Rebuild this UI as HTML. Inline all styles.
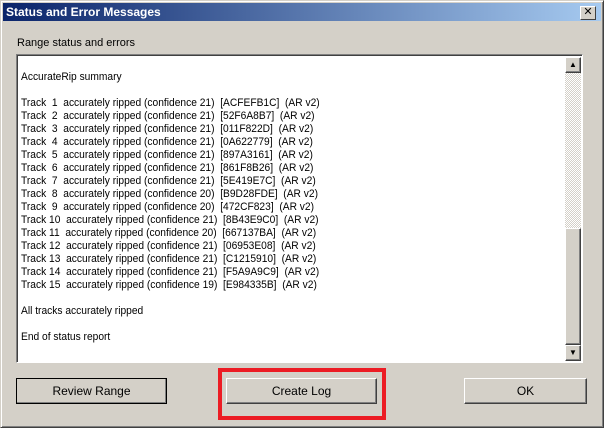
<!DOCTYPE html>
<html><head><style>
*{box-sizing:border-box;margin:0;padding:0}
body{width:604px;height:428px;background:#d4d0c8;font-family:"Liberation Sans",sans-serif;font-size:11px;position:relative;overflow:hidden;color:#000}
.win{position:absolute;left:0;top:0;width:604px;height:428px;border:1px solid;border-color:#d4d0c8 #404040 #404040 #d4d0c8;box-shadow:inset 1px 1px #fff,inset -1px -1px #808080}
.title{position:absolute;left:3px;top:3px;width:598px;height:18px;background:linear-gradient(to right,#0a246a,#a6caf0);color:#fff;font-weight:bold;font-size:12px;line-height:18px;padding-left:3px}
.x{position:absolute;right:5px;top:3px;width:16px;height:14px;background:#d4d0c8;border:1px solid;border-color:#fff #404040 #404040 #fff;font-size:11px;line-height:11px;text-align:center;color:#000;font-weight:normal}
.lbl{position:absolute;left:17px;top:37px}
.box{position:absolute;left:16px;top:54px;width:567px;height:309px;background:#fff;border:1px solid;border-color:#808080 #fff #fff #808080;box-shadow:inset 1px 1px #404040}
.txt{position:absolute;left:4px;top:16px;line-height:13px;white-space:pre;transform:scaleX(.93);transform-origin:0 0}
.sb{position:absolute;left:548px;top:2px;width:16px;height:304px;background:repeating-conic-gradient(#d4d0c8 0 25%,#fff 0 50%) 0 0/2px 2px}
.btn{position:absolute;background:#d4d0c8;border:1px solid;border-color:#fff #404040 #404040 #fff;box-shadow:inset -1px -1px #808080;text-align:center}
.ar{font-size:8px;line-height:14px}
.pb{position:absolute;height:26px;line-height:24px;font-size:12px}
</style></head><body>
<div class="win"></div>
<div class="title">Status and Error Messages<div class="x">✕</div></div>
<div class="lbl">Range status and errors</div>
<div class="box">
<div class="txt">AccurateRip summary

Track  1  accurately ripped (confidence 21)  [ACFEFB1C]  (AR v2)
Track  2  accurately ripped (confidence 21)  [52F6A8B7]  (AR v2)
Track  3  accurately ripped (confidence 21)  [011F822D]  (AR v2)
Track  4  accurately ripped (confidence 21)  [0A622779]  (AR v2)
Track  5  accurately ripped (confidence 21)  [897A3161]  (AR v2)
Track  6  accurately ripped (confidence 21)  [861F8B26]  (AR v2)
Track  7  accurately ripped (confidence 21)  [5E419E7C]  (AR v2)
Track  8  accurately ripped (confidence 20)  [B9D28FDE]  (AR v2)
Track  9  accurately ripped (confidence 20)  [472CF823]  (AR v2)
Track 10  accurately ripped (confidence 21)  [8B43E9C0]  (AR v2)
Track 11  accurately ripped (confidence 20)  [667137BA]  (AR v2)
Track 12  accurately ripped (confidence 21)  [06953E08]  (AR v2)
Track 13  accurately ripped (confidence 21)  [C1215910]  (AR v2)
Track 14  accurately ripped (confidence 21)  [F5A9A9C9]  (AR v2)
Track 15  accurately ripped (confidence 19)  [E984335B]  (AR v2)

All tracks accurately ripped

End of status report</div>
<div class="sb">
<div class="btn ar" style="left:0;top:0;width:16px;height:16px">▲</div>
<div class="btn" style="left:0;top:171px;width:16px;height:117px"></div>
<div class="btn ar" style="left:0;top:288px;width:16px;height:16px">▼</div>
</div>
</div>
<div class="btn pb" style="left:16px;top:378px;width:151px;outline:1px solid #000;outline-offset:-1px">Review Range</div>
<div style="position:absolute;left:218px;top:368px;width:168px;height:52px;border:4px solid #ec1c24"></div>
<div class="btn pb" style="left:226px;top:378px;width:151px">Create Log</div>
<div class="btn pb" style="left:464px;top:378px;width:123px">OK</div>
</body></html>
